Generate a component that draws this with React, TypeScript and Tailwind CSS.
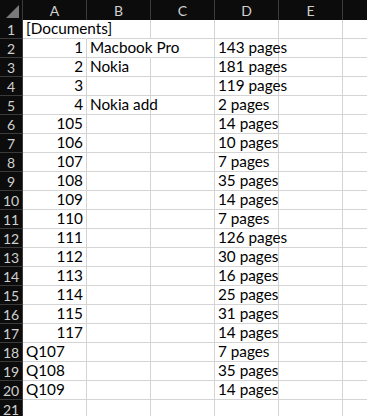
import React from "react";

type Row = { a?: string; aNum?: boolean; b?: string; d?: string; noA?: boolean; noB?: boolean };

const rows: Row[] = [
  { a: "[Documents]", noA: true },
  { a: "1", aNum: true, b: "Macbook Pro", noB: true, d: "143 pages" },
  { a: "2", aNum: true, b: "Nokia", d: "181 pages" },
  { a: "3", aNum: true, d: "119 pages" },
  { a: "4", aNum: true, b: "Nokia add", d: "2 pages" },
  { a: "105", aNum: true, d: "14 pages" },
  { a: "106", aNum: true, d: "10 pages" },
  { a: "107", aNum: true, d: "7 pages" },
  { a: "108", aNum: true, d: "35 pages" },
  { a: "109", aNum: true, d: "14 pages" },
  { a: "110", aNum: true, d: "7 pages" },
  { a: "111", aNum: true, d: "126 pages" },
  { a: "112", aNum: true, d: "30 pages" },
  { a: "113", aNum: true, d: "16 pages" },
  { a: "114", aNum: true, d: "25 pages" },
  { a: "115", aNum: true, d: "31 pages" },
  { a: "117", aNum: true, d: "14 pages" },
  { a: "Q107", d: "7 pages" },
  { a: "Q108", d: "35 pages" },
  { a: "Q109", d: "14 pages" },
  {},
];

// F is only partly in view, its letter sits past the edge
const cols = ["A", "B", "C", "D", "E", ""];

function Cell({ text, right, noBorder }: { text?: string; right?: boolean; noBorder?: boolean }) {
  return (
    <div
      className={
        "h-[19px] border-b border-[#d4d4d4] flex items-end pb-[1px] px-[3px] whitespace-nowrap text-[15.3px] leading-[17px] text-black " +
        (noBorder ? "border-r border-r-transparent " : "border-r ") +
        (right ? "justify-end" : "justify-start")
      }
    >
      {text}
    </div>
  );
}

export default function App() {
  return (
    <div
      className="w-[367px] h-[416px] overflow-hidden bg-white"
      style={{ fontFamily: "Lato, 'Open Sans', sans-serif" }}
    >
      <div className="grid grid-cols-[23px_64px_64px_64px_64px_64px_64px]">
        <div className="h-[20px] bg-[#0c0c0c] border-r border-[#3a3a3a] relative">
          <svg className="absolute left-[6px] top-[5px]" width="13" height="13" viewBox="0 0 13 13">
            <polygon points="13,0 13,13 0,13" fill="#7a7a7a" />
          </svg>
        </div>
        {cols.map((c, i) => (
          <div
            key={i}
            className="h-[20px] bg-[#0c0c0c] border-r border-[#3a3a3a] flex items-center justify-center text-[14px] text-[#d0d0d0]"
          >
            {c}
          </div>
        ))}
        {rows.map((r, i) => (
          <React.Fragment key={i}>
            <div className="h-[19px] bg-[#0c0c0c] border-r border-b border-[#3a3a3a] flex items-center justify-center text-[14px] text-[#d0d0d0]">
              {i + 1}
            </div>
            <Cell text={r.a} right={r.aNum} noBorder={r.noA} />
            <Cell text={r.b} noBorder={r.noB} />
            <Cell />
            <Cell text={r.d} />
            <Cell />
            <Cell />
          </React.Fragment>
        ))}
      </div>
    </div>
  );
}
